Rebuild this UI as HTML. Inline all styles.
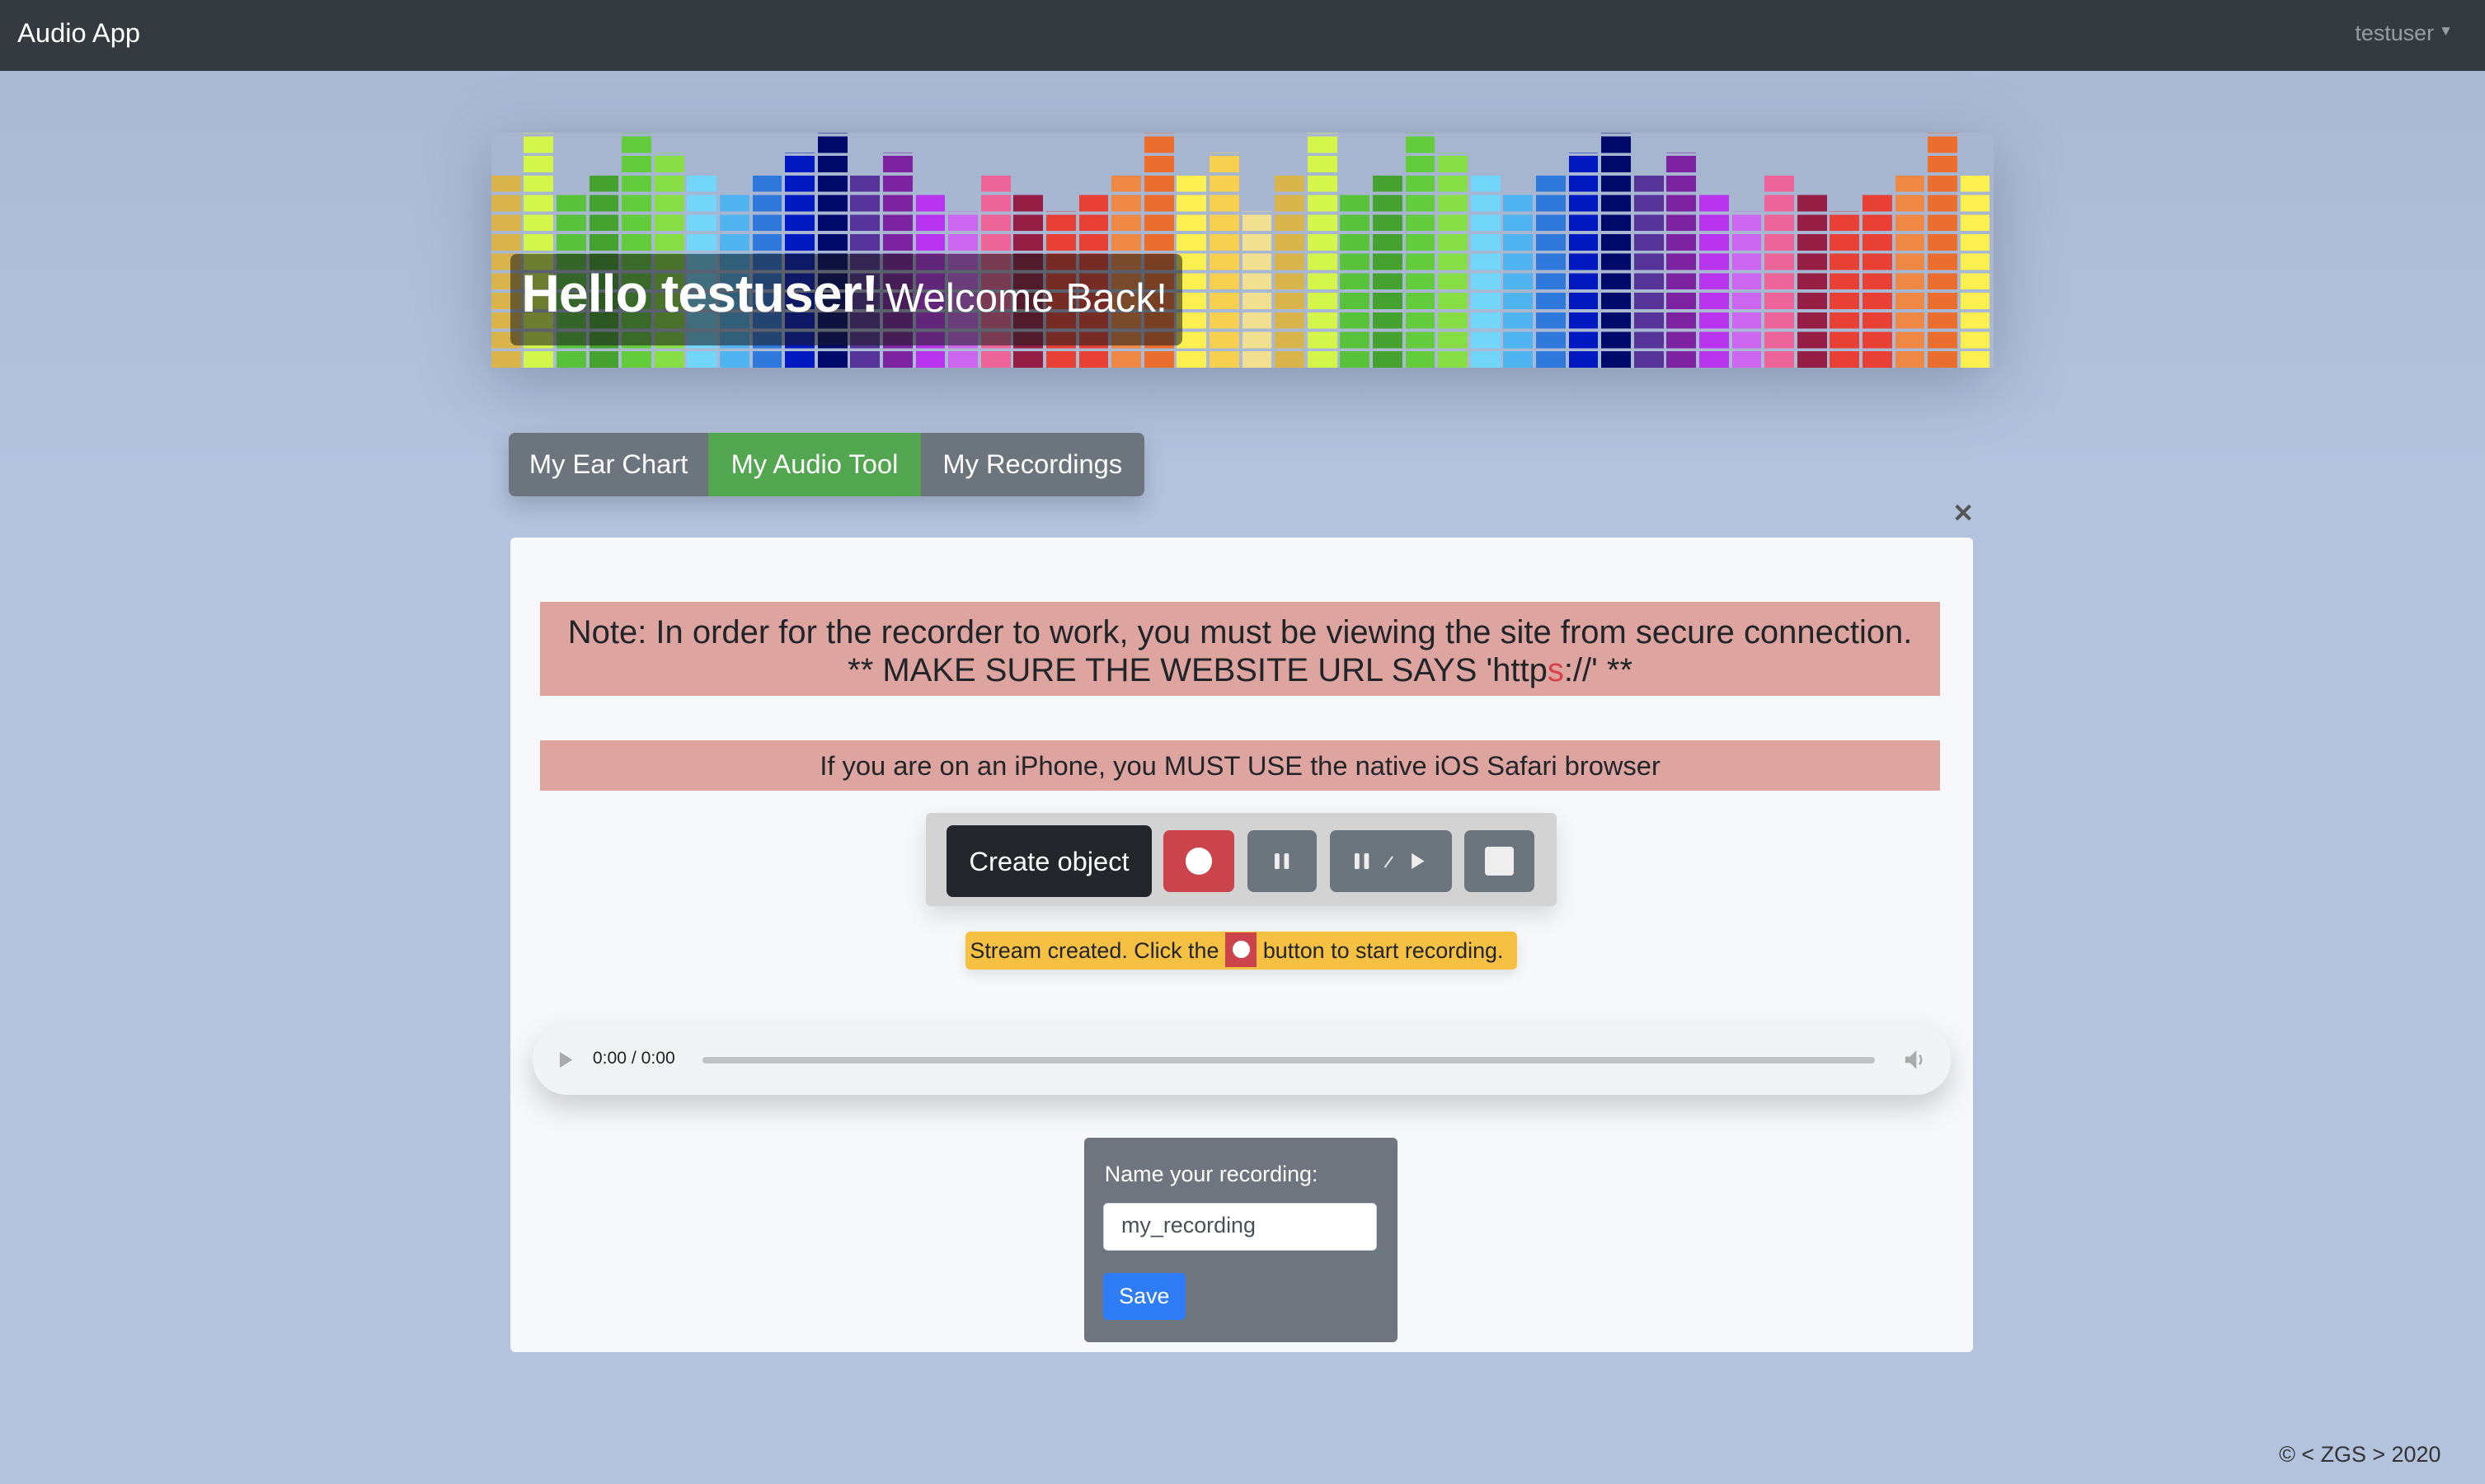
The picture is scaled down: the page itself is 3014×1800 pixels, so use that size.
<!DOCTYPE html>
<html><head><meta charset="utf-8"><style>
html,body{margin:0;padding:0;width:3014px;height:1800px;overflow:hidden;background:#b2c2dc;}
#w{zoom:1.92219;width:1568px;height:936px;position:relative;font-family:"Liberation Sans",sans-serif;background:linear-gradient(#a9b8d2,#b3c3de 300px,#b3c3de);}
.a{position:absolute;box-sizing:border-box;}
.nav{left:0;top:0;width:1568px;height:45px;background:#343a40;}
.col{position:absolute;bottom:0;width:18.6px;}
.btn{position:absolute;border-radius:4px;display:flex;align-items:center;justify-content:center;color:#fff;}
</style></head><body><div id="w">
<div class="a nav"></div>
<div class="a" style="left:11px;top:11px;color:#fff;font-size:17px;">Audio App</div>
<div class="a" style="left:1486px;top:13px;color:#9a9da0;font-size:14px;">testuser<span style="font-size:9px;position:relative;top:-3px;margin-left:3px">▼</span></div>

<div class="a" style="left:310px;top:84px;width:948px;height:148px;box-shadow:0 10px 40px rgba(60,70,100,.35);background:rgba(150,165,190,.25)">
<div id="eq" style="position:absolute;left:0;top:0;width:948px;height:148px;"></div>
</div>
<div class="a" style="left:322px;top:160px;width:424px;height:58px;background:rgba(25,25,25,.55);border-radius:4px;"></div>
<div class="a" style="left:329px;top:166px;color:#fff;white-space:nowrap;"><span style="font-size:33.5px;font-weight:bold;letter-spacing:-0.5px">Hello testuser!</span> <span style="font-size:25.7px">Welcome Back!</span></div>

<div class="a" style="left:321px;top:273px;width:401px;height:40px;border-radius:4px;overflow:hidden;box-shadow:0 6px 14px rgba(0,0,0,.18);display:flex;font-size:17px;color:#fff;">
<div style="width:126px;background:#6c757d;display:flex;align-items:center;justify-content:center">My Ear Chart</div>
<div style="width:134px;background:#52a650;display:flex;align-items:center;justify-content:center">My Audio Tool</div>
<div style="width:141px;background:#6c757d;display:flex;align-items:center;justify-content:center">My Recordings</div>
</div>
<div class="a" style="left:1232px;top:315px;font-size:16px;font-weight:bold;color:#555">✕</div>

<div class="a" style="left:322px;top:339px;width:923px;height:514px;background:#f7f8fa;border-radius:3px;"></div>
<div class="a" style="left:341px;top:380px;width:883px;height:59px;background:#dea5a0;color:#212529;font-size:20.8px;text-align:center;line-height:24px;padding-top:7px;white-space:nowrap">Note: In order for the recorder to work, you must be viewing the site from secure connection.<br>** MAKE SURE THE WEBSITE URL SAYS 'http<span style="color:#d9414a">s</span>://' **</div>
<div class="a" style="left:341px;top:467px;width:883px;height:32px;background:#dea5a0;color:#212529;font-size:17px;text-align:center;line-height:32px;">If you are on an iPhone, you MUST USE the native iOS Safari browser</div>

<div class="a" style="left:584px;top:513px;width:398px;height:59px;background:#d3d3d3;border-radius:3px;box-shadow:0 6px 14px rgba(0,0,0,.12)"></div>
<div class="btn" style="left:597px;top:521px;width:130px;height:45px;background:#23272b;font-size:17px;">Create object</div>
<div class="btn" style="left:734px;top:524px;width:45px;height:39px;background:#cc444b;"><div style="width:17px;height:17px;border-radius:50%;background:#fff"></div></div>
<div class="btn" style="left:787px;top:524px;width:44px;height:39px;background:#6c757d;font-size:11px;font-weight:bold;"><svg width="9" height="10"><rect x="0" y="0" width="3" height="10" rx="1" fill="#eee"/><rect x="6" y="0" width="3" height="10" rx="1" fill="#eee"/></svg></div>
<div class="btn" style="left:839px;top:524px;width:77px;height:39px;background:#6c757d;"><svg width="46" height="12"><rect x="0" y="1" width="3" height="10" rx="1" fill="#eee"/><rect x="6" y="1" width="3" height="10" rx="1" fill="#eee"/><path d="M19 10 L24 3" stroke="#eee" stroke-width="1"/><path d="M36 1 L44 6 L36 11Z" fill="#eee"/></svg></div>
<div class="btn" style="left:924px;top:524px;width:44px;height:39px;background:#6c757d;"><div style="width:18px;height:18px;background:#eee;border-radius:2px"></div></div>

<div class="a" style="left:609px;top:588px;width:348px;height:24px;background:#f6c042;border-radius:3px;font-size:14px;color:#212529;line-height:24px;padding-left:3px;white-space:nowrap;box-shadow:0 3px 8px rgba(0,0,0,.1)">Stream created. Click the <span style="display:inline-block;width:20px;height:22px;background:#cc444b;vertical-align:middle;margin:-3px 0 0;position:relative;top:0"><span style="display:block;width:11px;height:11px;border-radius:50%;background:#fff;margin:5px auto"></span></span> button to start recording.</div>

<div class="a" style="left:336px;top:646px;width:895px;height:45px;background:#f1f3f4;border-radius:22px;box-shadow:0 8px 18px rgba(0,0,0,.18)"></div>
<svg class="a" style="left:352px;top:663px" width="10" height="12"><path d="M1 1 L9 6 L1 11Z" fill="#aaa"/></svg>
<div class="a" style="left:374px;top:662px;font-size:11px;color:#222">0:00 / 0:00</div>
<div class="a" style="left:443px;top:667px;width:740px;height:4px;background:#c0c1c3;border-radius:2px"></div>
<svg class="a" style="left:1201px;top:662px" width="14" height="14"><path d="M1 5 H4 L8 1 V13 L4 9 H1Z" fill="#aaa"/><path d="M10 4 Q12 7 10 10" stroke="#aaa" fill="none" stroke-width="1.3"/></svg>

<div class="a" style="left:684px;top:718px;width:198px;height:129px;background:#6e757e;border-radius:3px;"></div>
<div class="a" style="left:697px;top:733px;font-size:14px;color:#fff">Name your recording:</div>
<div class="a" style="left:696px;top:759px;width:173px;height:30px;background:#fff;border:1px solid #ced4da;border-radius:3px;font-size:14px;color:#495057;padding:6px 0 0 11px">my_recording</div>
<div class="btn" style="left:696px;top:803px;width:52px;height:30px;background:#2f7df6;font-size:14px;border-radius:3px">Save</div>

<div class="a" style="left:1438px;top:910px;font-size:14px;color:#333">© &lt; ZGS &gt; 2020</div>
</div>
<script>
var pal=["#d8b44a","#d4f54a","#57c23a","#45a22e","#62cc3c","#86dd44","#72d6f8","#4fb4f0","#2f78dc","#0019c0","#000a6a","#553399","#7d22a0","#b834ee","#cc66f0","#ec6498","#961e44","#e84034","#e84034","#ee8844","#ec6e2e","#fcf050","#f8d050","#f0e090"];
var hs=[10,12,9,10,12,11,10,9,10,11,12,10,11,9,8,10,9,8,9,10,12,10,11,8];
var eq=document.getElementById('eq'),h='';
for(var i=0;i<46;i++){var c=pal[i%24],n=hs[i%24];
h+='<div class="col" style="left:'+(i*20.6).toFixed(1)+'px;height:'+(n*12.33).toFixed(1)+'px;background:repeating-linear-gradient(to top,'+c+' 0 10.3px,transparent 10.3px 12.33px)"></div>';}
eq.innerHTML=h;
</script>
</body></html>
